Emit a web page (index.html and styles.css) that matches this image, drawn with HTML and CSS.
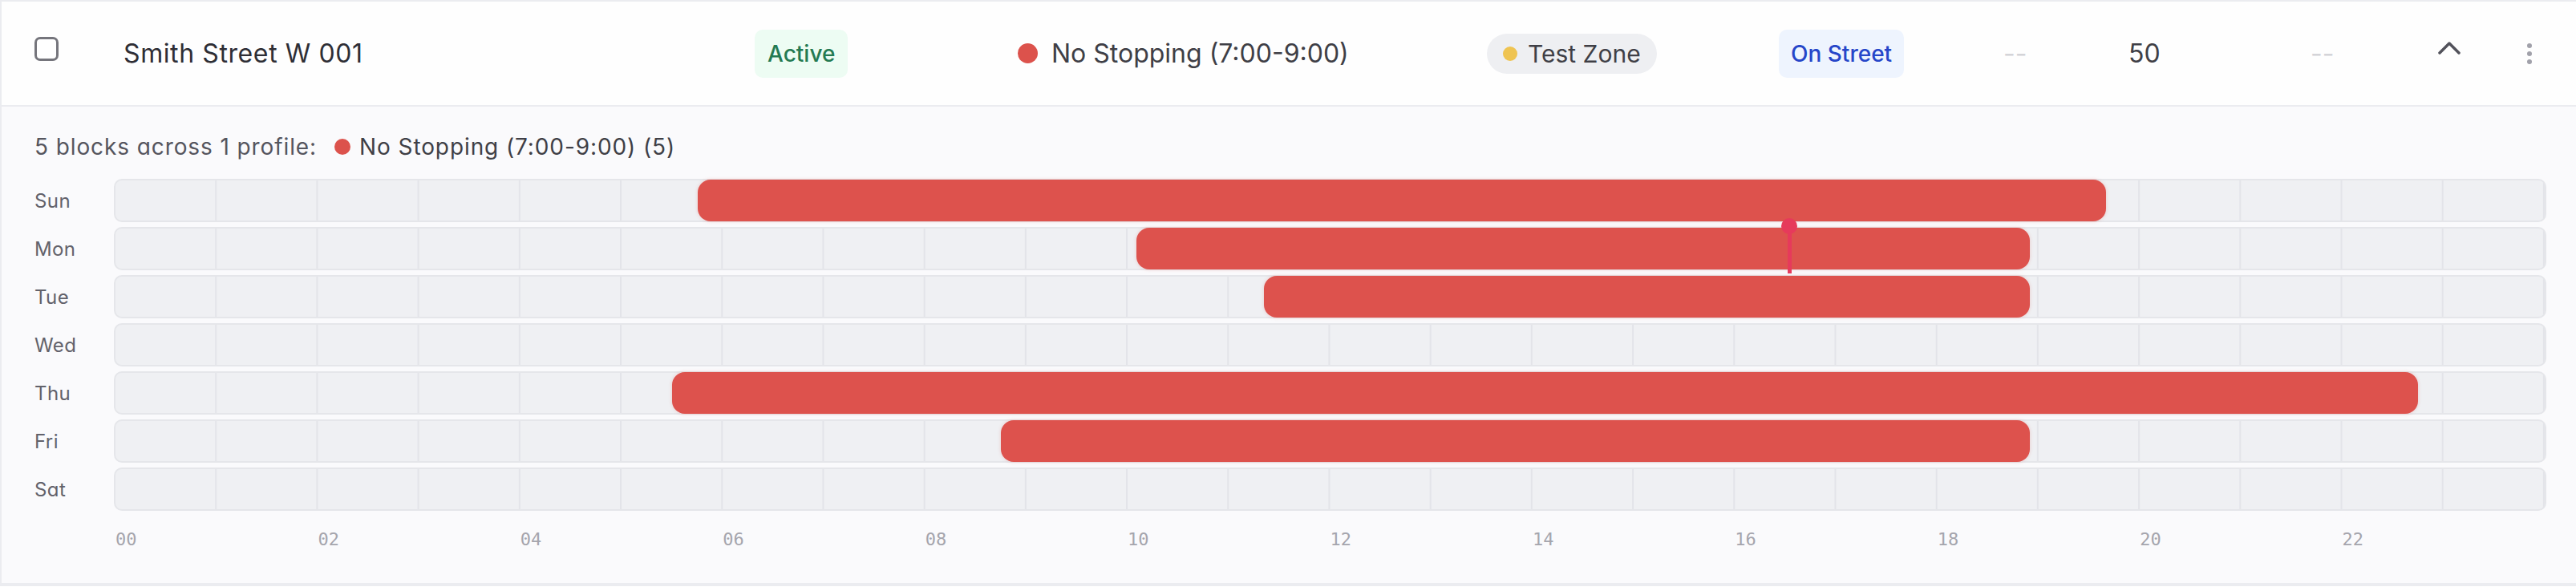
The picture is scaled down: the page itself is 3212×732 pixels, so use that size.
FILE: index.html
```html
<!DOCTYPE html>
<html lang="en">
<head>
    <meta charset="UTF-8" />
    <meta name="viewport" content="width=device-width, initial-scale=1.0" />
    <title>Zones - Smith Street W 001</title>
    <link rel="stylesheet" href="styles.css">
</head>
<body>
    <div class="zone-row">
        <div class="row-main">
            <div class="cell cell-check"><input type="checkbox" class="row-check" aria-label="Select row"></div>
            <div class="cell cell-name">Smith Street W 001</div>
            <div class="cell"><span class="badge badge-active">Active</span></div>
            <div class="cell restriction"><span class="dot dot-red"></span>No Stopping (7:00-9:00)</div>
            <div class="cell"><span class="zone-pill"><span class="dot dot-yellow"></span>Test Zone</span></div>
            <div class="cell"><span class="badge badge-street">On Street</span></div>
            <div class="cell empty">--</div>
            <div class="cell">50</div>
            <div class="cell empty">--</div>
            <div class="cell">
                <button type="button" class="icon-btn collapse-btn" aria-label="Collapse">
                    <svg width="28" height="16" viewBox="0 0 28 16"><polyline points="2,14 14,2 26,14" fill="none" stroke="#52525b" stroke-width="3.5" stroke-linecap="round" stroke-linejoin="round"/></svg>
                </button>
            </div>
            <div class="cell">
                <button type="button" class="icon-btn" aria-label="More actions">
                    <svg width="6" height="26" viewBox="0 0 6 26"><circle cx="3" cy="3" r="3" fill="#a1a1aa"/><circle cx="3" cy="13" r="3" fill="#a1a1aa"/><circle cx="3" cy="23" r="3" fill="#a1a1aa"/></svg>
                </button>
            </div>
        </div>

        <div class="row-detail">
            <div class="summary">
                <span>5 blocks across 1 profile:</span>
                <span class="legend"><span class="dot dot-red"></span>No Stopping (7:00-9:00) (5)</span>
            </div>

            <div class="week">
                <div class="day">
                    <span class="day-name">Sun</span>
                    <div class="track"><div class="block" style="left:23.958%;width:57.986%"></div></div>
                </div>
                <div class="day">
                    <span class="day-name">Mon</span>
                    <div class="track">
                        <div class="block" style="left:42.014%;width:36.806%"></div>
                        <div class="now-marker" style="left:68.889%"></div>
                    </div>
                </div>
                <div class="day">
                    <span class="day-name">Tue</span>
                    <div class="track"><div class="block" style="left:47.292%;width:31.528%"></div></div>
                </div>
                <div class="day">
                    <span class="day-name">Wed</span>
                    <div class="track"></div>
                </div>
                <div class="day">
                    <span class="day-name">Thu</span>
                    <div class="track"><div class="block" style="left:22.917%;width:71.875%"></div></div>
                </div>
                <div class="day">
                    <span class="day-name">Fri</span>
                    <div class="track"><div class="block" style="left:36.458%;width:42.361%"></div></div>
                </div>
                <div class="day">
                    <span class="day-name">Sat</span>
                    <div class="track"></div>
                </div>
            </div>

            <div class="axis">
                <span>00</span><span>02</span><span>04</span><span>06</span>
                <span>08</span><span>10</span><span>12</span><span>14</span>
                <span>16</span><span>18</span><span>20</span><span>22</span>
            </div>
        </div>
    </div>
</body>
</html>
```

FILE: styles.css
```css
body {
    font-family: 'Inter', 'Noto Sans', Arial, sans-serif;
    font-feature-settings: "cv11";
    background-color: #fff;
    color: #3f3f46;
    margin: 0;
    padding: 0;
}
.zone-row {
    border: 2px solid #ebecf0;
    border-right: none;
}

/* Table row */
.row-main {
    display: grid;
    grid-template-columns: 111px 787px 328px 585px 364px 280px 156px 227px 159px 111px 1fr;
    height: 129px;
    padding-left: 41px;
    background: #fefefe;
    border-bottom: 2px solid #ebecf0;
    font-size: 32px;
}
.cell {
    display: flex;
    align-items: center;
    white-space: nowrap;
}
.cell-name {
    color: #2e2e35;
    letter-spacing: 0.6px;
}
.row-check {
    appearance: none;
    -webkit-appearance: none;
    width: 30px;
    height: 30px;
    margin: 0 0 12px 0;
    border: 3px solid #75757c;
    border-radius: 7px;
    background: #fff;
}
.badge {
    display: inline-flex;
    align-items: center;
    height: 60px;
    padding: 0 16px;
    border-radius: 10px;
    font-size: 28px;
    font-weight: 500;
}
.badge-active {
    background: #edfcf3;
    color: #247a52;
}
.badge-street {
    background: #eef4fe;
    color: #2646c9;
    padding: 0 15px;
}
.dot {
    display: inline-block;
    border-radius: 50%;
    flex-shrink: 0;
}
.dot-red {
    width: 25px;
    height: 25px;
    background: #dc524c;
}
.dot-yellow {
    width: 18px;
    height: 18px;
    background: #efc452;
}
.restriction {
    gap: 17px;
}
.zone-pill {
    display: inline-flex;
    align-items: center;
    gap: 13px;
    height: 50px;
    padding: 0 20px;
    border-radius: 25px;
    background: #eeeff2;
    font-size: 30px;
}
.empty {
    color: #d4d4d8;
}
.icon-btn {
    display: flex;
    padding: 0;
    border: none;
    background: none;
    cursor: pointer;
}
.collapse-btn {
    margin-bottom: 14px;
}

/* Expanded schedule */
.row-detail {
    background: #fafafc;
    padding: 30px 37px 38px 41px;
    border-bottom: 2px solid #ebecf0;
}
.summary {
    display: flex;
    align-items: center;
    font-size: 28px;
    line-height: 40px;
    letter-spacing: 0.9px;
    color: #55555e;
}
.legend {
    display: flex;
    align-items: center;
    gap: 11px;
    margin-left: 22px;
    color: #3f3f46;
}
.legend .dot-red {
    width: 20px;
    height: 20px;
}
.week {
    display: flex;
    flex-direction: column;
    gap: 6px;
    margin-top: 20px;
}
.day {
    display: grid;
    grid-template-columns: 99px 1fr;
    align-items: center;
}
.day-name {
    font-size: 24px;
    letter-spacing: 0.4px;
    color: #62626b;
}
.track {
    position: relative;
    height: 50px;
    border: 2px solid #e5e6ea;
    border-radius: 10px;
    background-color: #eff0f3;
    background-image: linear-gradient(to left, #e3e4e9 2px, transparent 2px);
    background-size: calc(100% / 24) 100%;
}
.block {
    position: absolute;
    top: -1px;
    bottom: -1px;
    background: #dd524d;
    border-radius: 16px;
    box-shadow: 0 0 4px rgba(221, 82, 77, 0.25);
}
.now-marker {
    position: absolute;
    top: -3px;
    bottom: -6px;
    width: 5px;
    margin-left: -2px;
    background: #e63a5b;
}
.now-marker::before {
    content: "";
    position: absolute;
    top: -10px;
    left: -8px;
    width: 20px;
    height: 20px;
    border-radius: 50%;
    background: #e63a5b;
}
.axis {
    display: grid;
    grid-template-columns: repeat(12, 1fr);
    margin: 20px 2px 0 101px;
    font-family: 'DejaVu Sans Mono', 'Liberation Mono', monospace;
    font-size: 22px;
    line-height: 32px;
    color: #a5a5ad;
}
```
